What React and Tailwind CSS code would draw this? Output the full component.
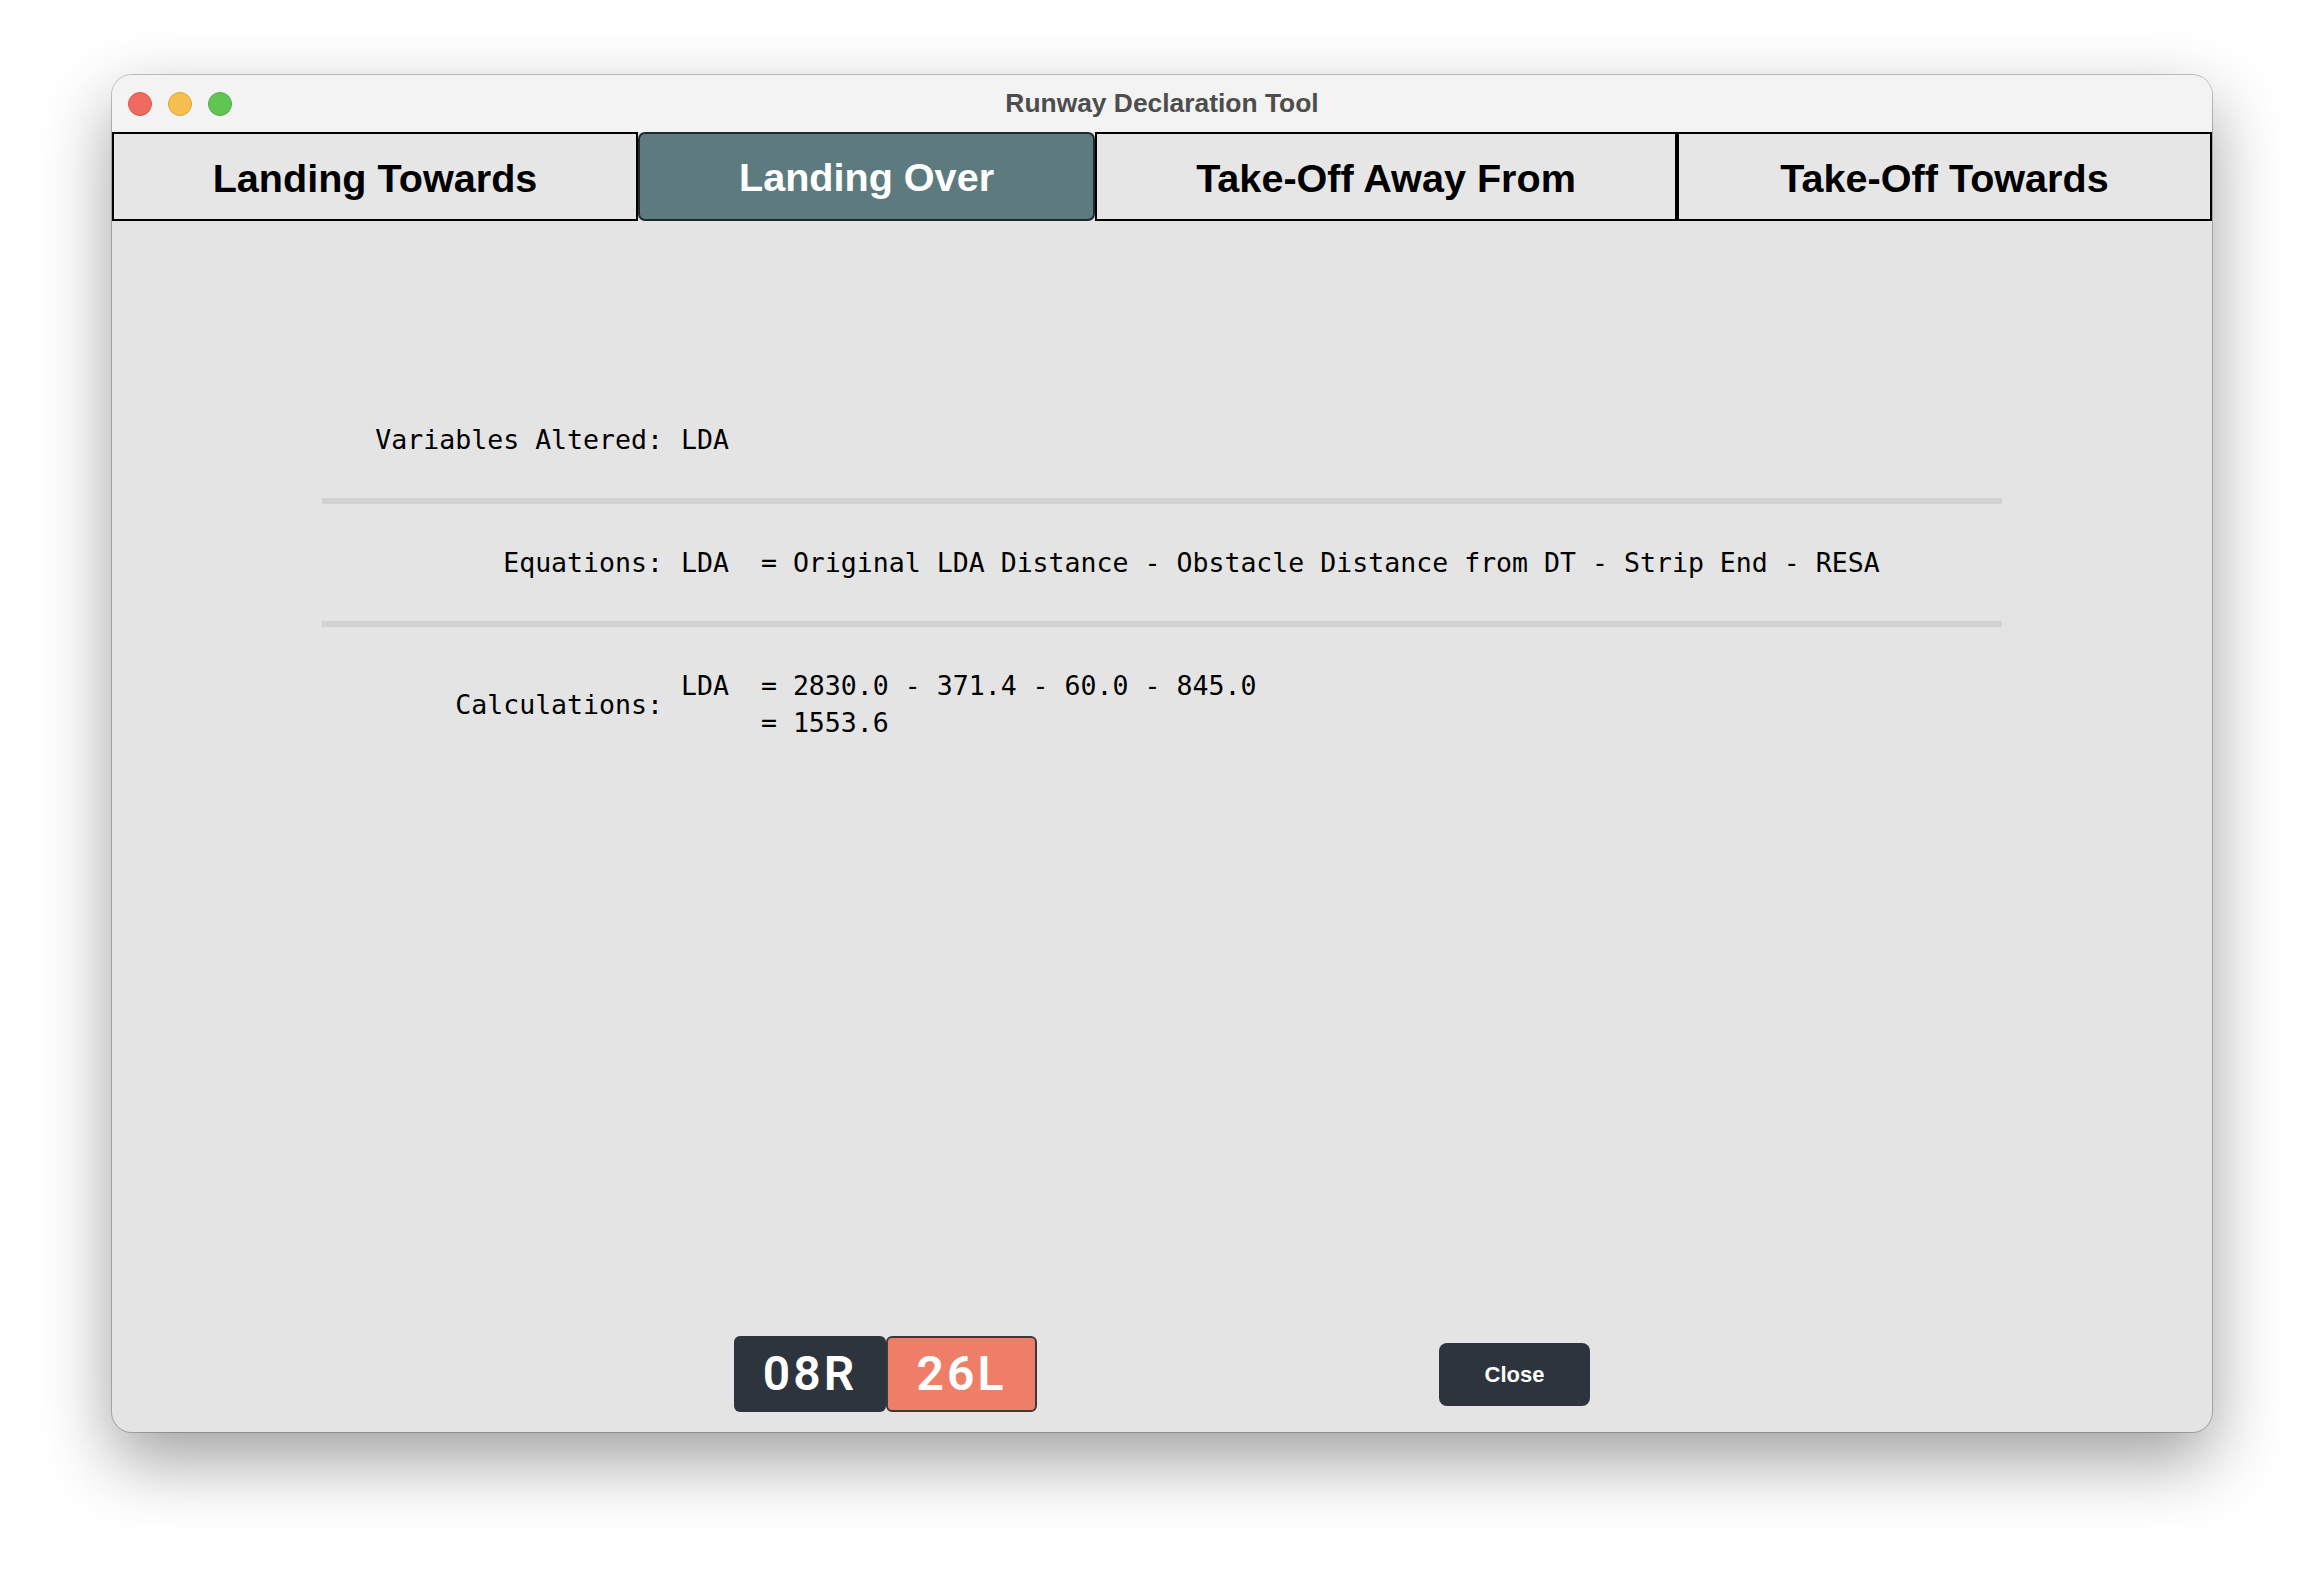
import React from "react"

const tabs = [
  { label: "Landing Towards", width: "w-[526px]" },
  { label: "Landing Over", width: "w-[457px]", active: true },
  { label: "Take-Off Away From", width: "w-[582px]" },
  { label: "Take-Off Towards", width: "w-[535px]" },
]

const sans = "font-['Liberation_Sans',Arial,sans-serif]"
const mono = "font-['DejaVu_Sans_Mono',monospace]"

const Row = ({ label, children }) => {
  return (
    <div className="flex items-center py-[40px]">
      <div className="w-[341px] shrink-0 text-right leading-[37px]">{label}</div>
      <div className="ml-[18px] whitespace-pre leading-[37px]">{children}</div>
    </div>
  )
}

const App = () => {
  return (
    <div className="min-h-[1580px] w-full bg-white pt-[75px]">
      <div className="mx-auto flex h-[1357px] w-[2100px] flex-col overflow-hidden rounded-[20px] bg-[#e4e4e4] shadow-[0_0_0_1px_rgba(0,0,0,0.22),0_28px_70px_rgba(0,0,0,0.38)]">
        {/* title bar */}
        <div className="relative flex h-[57px] shrink-0 items-center bg-[#f3f3f3] pl-[16px]">
          <div className="flex gap-[16px]">
            <span className="h-[24px] w-[24px] rounded-full border border-[#d9574c] bg-[#ee6a5f]" />
            <span className="h-[24px] w-[24px] rounded-full border border-[#dca53c] bg-[#f5be4f]" />
            <span className="h-[24px] w-[24px] rounded-full border border-[#4fae43] bg-[#61c554]" />
          </div>
          <div className={`absolute inset-x-0 top-0 flex h-full items-center justify-center text-[26.4px] font-bold text-[#4d4d4d] ${sans}`}>
            Runway Declaration Tool
          </div>
        </div>

        {/* tabs */}
        <div className={`flex h-[89px] shrink-0 bg-[#e4e4e4] ${sans}`}>
          {tabs.map((t) =>
            t.active ? (
              <div
                key={t.label}
                className={`${t.width} flex items-center justify-center rounded-[7px] border-2 border-[#1f2a2c] bg-[#5d7b7f] pt-[2px] text-[39.6px] font-bold text-white`}
              >
                {t.label}
              </div>
            ) : (
              <div
                key={t.label}
                className={`${t.width} flex items-center justify-center border-2 border-black bg-[#e6e6e6] pt-[4px] text-[39.6px] font-bold text-black`}
              >
                {t.label}
              </div>
            )
          )}
        </div>

        {/* content */}
        <div className={`mx-auto mt-[160px] w-[1680px] text-[26.55px] text-black ${mono}`}>
          <Row label="Variables Altered:">LDA</Row>
          <div className="h-[6px] bg-[#d2d2d2]" />
          <Row label="Equations:">LDA  = Original LDA Distance - Obstacle Distance from DT - Strip End - RESA</Row>
          <div className="h-[6px] bg-[#d2d2d2]" />
          <Row label="Calculations:">
            {"LDA  = 2830.0 - 371.4 - 60.0 - 845.0\n     = 1553.6"}
          </Row>
        </div>

        <div className="flex-1" />

        {/* bottom bar */}
        <div className="flex items-center pb-[20px] pl-[622px]">
          <div className="flex">
            <button className="flex h-[76px] w-[152px] items-center justify-center rounded-[6px] bg-[#2e343d] font-['Roboto',sans-serif] text-[48px] font-semibold tracking-[3px] text-white">
              08R
            </button>
            <button className="flex h-[76px] w-[151px] items-center justify-center rounded-[6px] border-2 border-[#3a3a3a] bg-[#ef7e68] font-['Roboto',sans-serif] text-[48px] font-semibold tracking-[3px] text-white">
              26L
            </button>
          </div>
          <button className={`ml-[402px] flex h-[63px] w-[151px] items-center justify-center rounded-[8px] bg-[#2e343d] text-[22px] font-bold text-white ${sans}`}>
            Close
          </button>
        </div>
      </div>
    </div>
  )
}

export default App
